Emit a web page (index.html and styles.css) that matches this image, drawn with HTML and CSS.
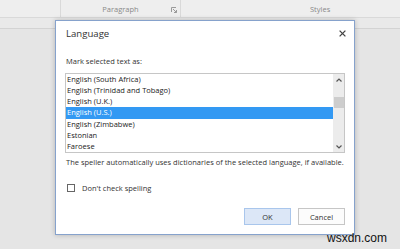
FILE: index.html
```html
<!DOCTYPE html>
<html>
<head>
<meta charset="utf-8">
<link rel="stylesheet" href="styles.css">
</head>
<body>
<div class="ribbon">
  <div class="group g1"></div>
  <div class="group g2">
    <span class="glabel">Paragraph</span>
    <svg class="launcher" width="6" height="6" viewBox="0 0 6 6"><path d="M0.5 5V0.5H5" fill="none" stroke="#9a9a9a" stroke-width="1"/><path d="M2 2L5.5 5.5M3 5.5H5.5V3" fill="none" stroke="#9a9a9a" stroke-width="1"/></svg>
  </div>
  <div class="group g3"><span class="glabel">Styles</span></div>
</div>
<div class="subbar"></div>

<div class="dialog">
  <div class="dlg-head">
    <span class="dlg-title">Language</span>
    <svg class="close" width="7" height="7" viewBox="0 0 7 7"><path d="M0.6 0.6L6.4 6.4M6.4 0.6L0.6 6.4" stroke="#444" stroke-width="1.3"/></svg>
  </div>
  <div class="prompt">Mark selected text as:</div>
  <div class="list">
    <div class="items">
      <div class="item">English (South Africa)</div>
      <div class="item">English (Trinidad and Tobago)</div>
      <div class="item">English (U.K.)</div>
      <div class="item selected">English (U.S.)</div>
      <div class="item">English (Zimbabwe)</div>
      <div class="item">Estonian</div>
      <div class="item">Faroese</div>
    </div>
    <div class="scrollbar">
      <div class="sb-btn"><svg width="6" height="4" viewBox="0 0 6 4"><path d="M0.5 3.5L3 1L5.5 3.5" fill="none" stroke="#555" stroke-width="1.2"/></svg></div>
      <div class="sb-track"><div class="sb-thumb"></div></div>
      <div class="sb-btn"><svg width="6" height="4" viewBox="0 0 6 4"><path d="M0.5 0.5L3 3L5.5 0.5" fill="none" stroke="#555" stroke-width="1.2"/></svg></div>
    </div>
  </div>
  <div class="note">The speller automatically uses dictionaries of the selected language, if available.</div>
  <label class="check"><span class="box"></span><span>Don't check spelling</span></label>
  <div class="buttons">
    <div class="btn primary">OK</div>
    <div class="btn">Cancel</div>
  </div>
</div>

<div class="watermark">wsxdn.com</div>
</body>
</html>
```

FILE: styles.css
```css
html, body {
  margin: 0;
  padding: 0;
}
body {
  width: 400px;
  height: 249px;
  overflow: hidden;
  background: #e5e5e5;
  font-family: "Open Sans", sans-serif;
  position: relative;
}
.ribbon {
  display: flex;
  height: 17px;
  background: #eeeeee;
  border-bottom: 1px solid #d9d9d9;
}
.group {
  height: 17px;
  border-right: 1px solid #d9d9d9;
  display: flex;
  align-items: center;
}
.g1 { width: 60px; }
.g2 {
  width: 119px;
  justify-content: center;
  position: relative;
}
.g3 {
  flex: 1;
  border-right: none;
  padding-left: 129px;
}
.glabel {
  font-size: 7.5px;
  line-height: 17px;
  padding-top: 2px;
  color: #8a8a8a;
}
.launcher {
  position: absolute;
  right: 3px;
  top: 7px;
}
.subbar {
  height: 10px;
  background: #e9e9e9;
  border-bottom: 1px solid #d3d3d3;
}
.dialog {
  position: absolute;
  left: 55px;
  top: 20px;
  width: 300px;
  height: 215px;
  box-sizing: border-box;
  background: #fff;
  border: 1px solid #86a2cc;
  box-shadow: 0 0 5px rgba(0, 0, 0, 0.22);
  padding: 0 9px 0 9px;
  font-size: 7.5px;
  color: #333;
}
.dlg-head {
  display: flex;
  justify-content: space-between;
  align-items: center;
  height: 15px;
  margin-top: 5px;
  padding-left: 1px;
}
.dlg-title {
  font-size: 9.6px;
  color: #333;
}
.close {
  margin-right: -1px;
}
.prompt {
  margin-top: 15px;
  line-height: 11px;
  padding-left: 1px;
}
.list {
  margin-top: 6px;
  height: 80px;
  box-sizing: border-box;
  border: 1px solid #c6c6c6;
  display: flex;
}
.items {
  flex: 1;
}
.item {
  height: 11.143px;
  line-height: 11.143px;
  padding-left: 1px;
  color: #222;
  white-space: nowrap;
}
.item.selected {
  background: #3399f3;
  color: #fff;
}
.scrollbar {
  width: 11px;
  background: #ececec;
  display: flex;
  flex-direction: column;
}
.sb-btn {
  height: 11px;
  display: flex;
  align-items: center;
  justify-content: center;
}
.sb-track {
  flex: 1;
  padding-top: 12px;
}
.sb-thumb {
  height: 11px;
  margin: 0 0 0 1px;
  background: #cdcdcd;
}
.note {
  margin-top: 4px;
  line-height: 11px;
  padding-left: 1px;
  white-space: nowrap;
}
.check {
  margin-top: 15px;
  height: 10px;
  display: flex;
  align-items: center;
  gap: 7px;
}
.box {
  width: 8px;
  height: 8px;
  box-sizing: border-box;
  border: 1px solid #666;
  margin-left: 2px;
}
.buttons {
  margin-top: 15px;
  display: flex;
  justify-content: flex-end;
  gap: 7px;
}
.btn {
  width: 47px;
  height: 17px;
  box-sizing: border-box;
  border: 1px solid #c6c6c6;
  background: #fcfcfc;
  color: #333;
  display: flex;
  align-items: center;
  justify-content: center;
}
.btn.primary {
  background: #dce7f7;
  border-color: #a9c6ec;
}
.watermark {
  position: absolute;
  left: 327px;
  top: 232px;
  font-family: "Liberation Sans", Arial, sans-serif;
  font-size: 12px;
  line-height: 12px;
  color: #111;
}
```
